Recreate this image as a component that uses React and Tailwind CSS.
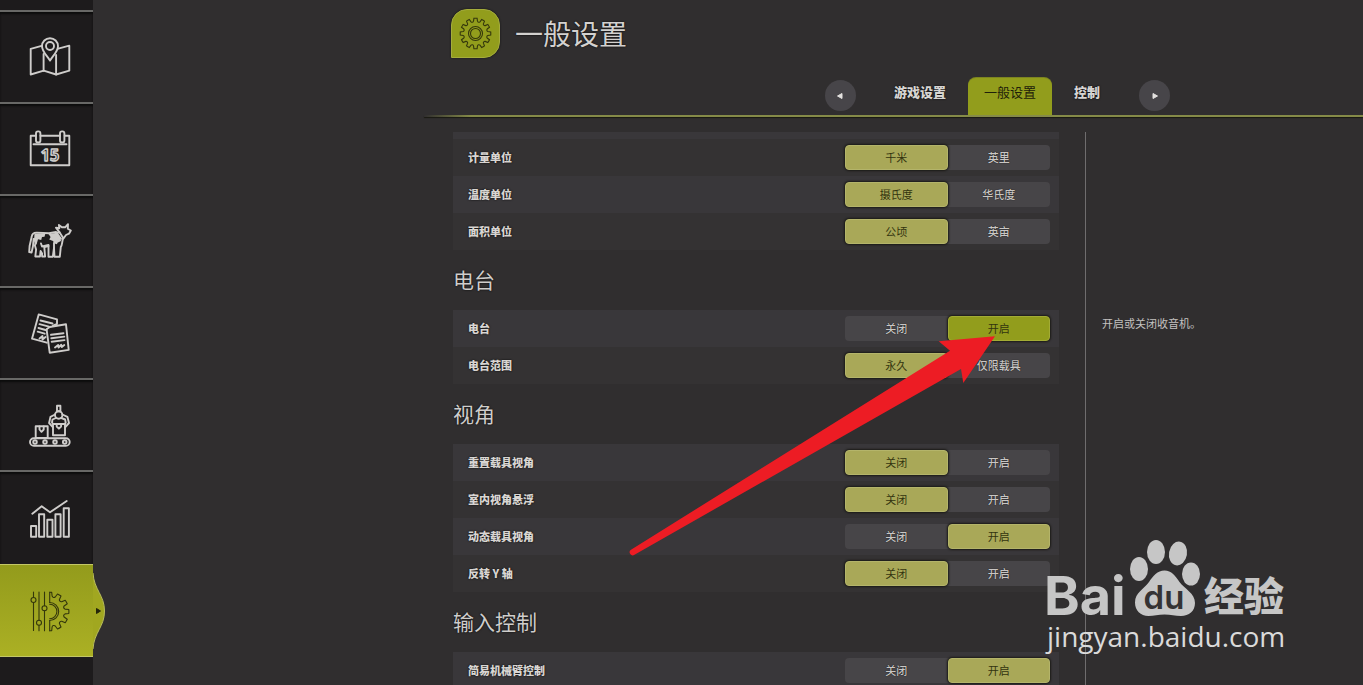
import { useState } from "react"

function gearPath(cx, cy, outer, inner, teeth)
{
    const step = (Math.PI * 2) / teeth
    const at = (r, a) => `${(cx + r * Math.cos(a)).toFixed(2)} ${(cy + r * Math.sin(a)).toFixed(2)}`
    const dip = step * inner * 0.24
    let d = ""
    for (let i = 0; i < teeth; i++) {
        const a = i * step
        d += `${i === 0 ? "M" : "L"}${at(inner, a - step * 0.3)} `
        d += `L${at(outer, a - step * 0.2)} A${outer} ${outer} 0 0 1 ${at(outer, a + step * 0.2)} `
        d += `L${at(inner, a + step * 0.3)} A${dip} ${dip} 0 0 0 ${at(inner, a + step * 0.7)} `
    }
    return d + "Z"
}

function Icon({ children, className = "text-[#cfcdcb]", strokeWidth = 1.9 })
{
    return (
        <svg
            className={`size-11 ${className}`}
            viewBox="0 0 44 44"
            fill="none"
            stroke="currentColor"
            strokeWidth={strokeWidth}
            strokeLinejoin="round"
            strokeLinecap="round"
            aria-hidden="true"
        >
            {children}
        </svg>
    )
}

const MapIcon = () => (
    <Icon>
        <path d="M13.6 10.8L2.7 13.8v25.7l13-3.8 12.4 3.8 13.2-3.8v-25l-11 3" />
        <path d="M15.6 19v16.7M28.1 20v19.5" />
        <path d="M22 25.6c-2.6-4.6-8-9-8-14.4a8 8 0 0 1 16 0c0 5.4-5.4 9.8-8 14.4z" />
        <circle cx="22" cy="11" r="4" />
    </Icon>
)

const CalendarIcon = () => (
    <Icon>
        <path d="M7.5 8.7H2.7v29.6h38.6V8.7h-4.6M12.5 8.7H32M5.5 17.3h33" />
        <rect x="8" y="4.4" width="4.4" height="11" rx="2" />
        <rect x="32" y="4.4" width="4.4" height="11" rx="2" />
        <text x="22" y="33.5" textAnchor="middle" fontSize="16" fontWeight="700" strokeWidth="1.5" className="font-['Noto_Sans',sans-serif]">15</text>
    </Icon>
)

const CowIcon = () => (
    <Icon>
        <path d="M28 13l-7 1.2-12-.6c-3-.2-4.800 1-5.200 3.700L1.600 27l-.4 6 2.400.5 1.400-6.500.6-7" />
        <path d="M6.500 20c1 2.500 1.300 4.500.4 6.500l1.200 4-.8 7h4.700l.6-5.500 1.500 2.500v3h3l-.8-9.300" />
        <path d="M13 24.500l1 3 6.500-1.500v11.700h4.300l1.200-8.700.5 8.700h5.300l1-9.700c1.500-1.500 1-4 2.200-8.500" />
        <path d="M16.500 28l4-1M26 24v5" />
        <path d="M31.500 13.300L28 8.700l3.300.6-.4-3.300 3 2.300h3.200L40 5.200l-.2 4.500 3 1.800-1.800 3.200-3 1.300-2.500 3.500z" />
        <path d="M31.500 13.300l-3 .5 4.500 6" />
        <path d="M6.500 14.500l11-.3-1 3.500-2.500.4-.8 3-3.200-.8-1.500 5.500-2.500-4z" fill="currentColor" stroke="none" />
        <path d="M20.500 15l8.500-1.300 3.500 4.700.5 3.600-3.500 1.700-.5 1.500-2.600-.8-1.400-2.400-3.800-1.500 1.400-2.500z" fill="currentColor" stroke="none" />
    </Icon>
)

const DocsIcon = () => (
    <Icon>
        <path d="M29 13V8.400L10.700 3.400 4 27.700l14.800 4M25 14.500l3.500-1.500" />
        <path d="M18.800 20v-2l3-2 16.200-2.700 2.700 25.600-19 2.800z" />
        <path d="M12.500 9.500l12 3M11.500 13.200l9.500 2.500M10.500 17l7 2M9.700 20.700l7 2M11.500 27.500l3-2.500v3.500l3-2.500" />
        <path d="M23 23.800l12.500-1.600M23.300 27.200l13-1.600M23.700 30.700l12.800-1.600M27 36.500l3.200-2.500.3 2.500 2.800-2.700.5 2.300 2.500-2" />
    </Icon>
)

const FactoryIcon = () => (
    <Icon>
        <rect x="2" y="35.2" width="39.7" height="7.6" rx="3.8" />
        <circle cx="7" cy="39" r="1.8" />
        <circle cx="17" cy="39" r="1.8" />
        <circle cx="27" cy="39" r="1.8" />
        <circle cx="36.7" cy="39" r="1.8" />
        <rect x="7.7" y="23.3" width="12" height="11.7" />
        <path d="M11.500 23.500v3l2 2.300 2.200-2.300v-3" />
        <path d="M25 21v11.300h12V21z" />
        <path d="M28.700 21v2.500l2.200 2.200 2.200-2.200V21" />
        <rect x="29" y="2.7" width="3.4" height="5.5" />
        <circle cx="30.7" cy="12" r="3.7" />
        <path d="M27 11.500l-4.500 2.300-1.400 6.200 3.700 4.200M28 15l-3.500 1.500-.5 3 1 1.500M34.400 11.500l5 2.300 1.600 6.200-3.700 4.200M33.400 15l3.700 1.500.6 3-.7 1.500" />
    </Icon>
)

const ChartIcon = () => (
    <Icon>
        <rect x="3" y="30" width="5.2" height="10.7" />
        <rect x="11" y="18.3" width="5.2" height="22.4" />
        <rect x="19.3" y="23.7" width="5.2" height="17" />
        <rect x="27.4" y="18.3" width="5.2" height="22.4" />
        <rect x="35.7" y="12.3" width="5.2" height="28.4" />
        <path d="M4.300 17.700l9.400-7.400 8.300 6L38.700 5" />
    </Icon>
)

const SettingsIcon = () => (
    <Icon className="text-[#34370c]" strokeWidth={1.1}>
        <clipPath id="half-gear">
            <rect x="21.3" y="0" width="23" height="44" />
        </clipPath>
        <path d="M5.500 3v5.500M5.500 13.500v28M11 3v28.200M11 36.200v5.500M16.500 3v13.800M16.500 21.800v20" />
        <circle cx="5.5" cy="11" r="2.5" />
        <circle cx="11" cy="33.7" r="2.5" />
        <circle cx="16.5" cy="19.3" r="2.5" />
        <g clipPath="url(#half-gear)">
            <path d={gearPath(21.7, 22.5, 19.2, 15.5, 12)} />
            <circle cx="21.7" cy="22.5" r="9" />
            <circle cx="21.7" cy="22.5" r="7.2" />
        </g>
        <path d="M21.700 3.300v10.200M21.700 31.500v10.200" />
    </Icon>
)

const menu = [
    { name: "地图", icon: MapIcon },
    { name: "日历", icon: CalendarIcon },
    { name: "动物", icon: CowIcon },
    { name: "合同", icon: DocsIcon },
    { name: "生产", icon: FactoryIcon },
    { name: "统计", icon: ChartIcon },
]

const groups = [
    {
        rows: [
            { name: "计量单位", options: ["千米", "英里"], value: 0 },
            { name: "温度单位", options: ["摄氏度", "华氏度"], value: 0 },
            { name: "面积单位", options: ["公顷", "英亩"], value: 0 },
        ],
    },
    {
        title: "电台",
        rows: [
            { name: "电台", options: ["关闭", "开启"], value: 1, focused: true },
            { name: "电台范围", options: ["永久", "仅限载具"], value: 0 },
        ],
    },
    {
        title: "视角",
        rows: [
            { name: "重置载具视角", options: ["关闭", "开启"], value: 0 },
            { name: "室内视角悬浮", options: ["关闭", "开启"], value: 0 },
            { name: "动态载具视角", options: ["关闭", "开启"], value: 1 },
            { name: "反转 Y 轴", options: ["关闭", "开启"], value: 0 },
        ],
    },
    {
        title: "输入控制",
        rows: [
            { name: "简易机械臂控制", options: ["关闭", "开启"], value: 1 },
        ],
    },
]

function Sidebar()
{
    return (
        <nav className="w-[93px] shrink-0 bg-[#1d1b1c]">
            <div className="h-3 border-b-2 border-[#686866]"></div>
            {menu.map(({ name, icon: MenuIcon }, i) => (
                <button
                    key={name}
                    aria-label={name}
                    className={`flex h-[92px] w-full items-center pl-7 shadow-[inset_0_2px_2px_#0c0c0c] ${i < menu.length - 1 ? "border-b-2 border-[#686866]" : ""}`}
                >
                    <MenuIcon />
                </button>
            ))}
            <button
                aria-label="设置"
                aria-current="page"
                className="relative flex h-[93px] w-full items-center border-y border-[#c3c766] bg-linear-to-b from-[#939b1c] to-[#abb024] pl-7"
            >
                <SettingsIcon />
                <svg className="absolute top-0 left-full h-[92px] w-[13px]" viewBox="0 0 13 92" aria-hidden="true">
                    <path d="M0 8C1 25 11.500 30 11.500 46S1 67 0 84z" fill="#a1a720" />
                    <path d="M0 8C1 25 11.500 30 11.500 46S1 67 0 84" fill="none" stroke="#b9bd5c" />
                    <path d="M3.500 43.500v5l4-2.500z" fill="#23250a" stroke="#23250a" strokeLinejoin="round" />
                </svg>
            </button>
        </nav>
    )
}

function RoundButton({ label, children })
{
    return (
        <button aria-label={label} className="flex size-[31px] items-center justify-center rounded-full bg-[#474549] text-[#e4e2e0]">
            <svg className="size-2" viewBox="0 0 8 8" fill="currentColor" stroke="currentColor" strokeLinejoin="round" aria-hidden="true">
                {children}
            </svg>
        </button>
    )
}

function Tabs()
{
    const [tab, setTab] = useState("一般设置")
    return (
        <div className="-ml-[29px] mt-5">
            <div className="flex h-[37px] justify-end pr-[193px]">
                <div className="mr-4 pt-0.5">
                    <RoundButton label="上一页"><path d="M6 1.500v5L1.500 4z" /></RoundButton>
                </div>
                {["游戏设置", "一般设置", "控制"].map((name) => (
                    <button
                        key={name}
                        onClick={() => setTab(name)}
                        className={`pb-2.5 text-[13px] leading-5 ${tab === name ? "rounded-t-lg bg-[#929d1c] px-4 text-[#1e200a] shadow-[0_-1px_0_#7c8420]" : "px-[22px] font-black text-[#d6d4d2] [text-shadow:0_0_2px_#000]"}`}
                    >
                        {name}
                    </button>
                ))}
                <div className="ml-[17px] pt-0.5">
                    <RoundButton label="下一页"><path d="M2 1.500v5L6.500 4z" /></RoundButton>
                </div>
            </div>
            <div className="h-0.5 bg-linear-to-r from-transparent via-[#858b48] via-5% to-[#858b48] shadow-[0_1px_1px_#1a1a12]"></div>
        </div>
    )
}

function SettingRow({ row, striped })
{
    const [value, setValue] = useState(row.value)
    return (
        <div className={`flex h-[37px] items-center justify-between pl-[15px] pr-[9px] ${striped ? "bg-[#39373a]" : "bg-[#343233]"}`}>
            <span className="text-[11px] font-black text-[#d8d5d2] [text-shadow:0_0_2px_#000]">{row.name}</span>
            <div role="group" aria-label={row.name} className="flex w-[205px] rounded-sm bg-[#474548]">
                {row.options.map((option, i) => (
                    <button
                        key={option}
                        aria-pressed={value === i}
                        onClick={() => setValue(i)}
                        className={`h-[25px] flex-1 rounded-sm border pb-0.5 text-[11px] leading-4 ${
                            value === i
                                ? `text-[#33340f] shadow-[0_0_2px_1px_#1b1a16] ${row.focused ? "border-[#a3ac35] bg-[#929d1c]" : "border-[#b4b46a] bg-[#a9a858]"}`
                                : "border-transparent font-medium text-[#c9c6c4] [text-shadow:0_0_1px_#000]"
                        }`}
                    >
                        {option}
                    </button>
                ))}
            </div>
        </div>
    )
}

function Arrow()
{
    return (
        <svg className="pointer-events-none absolute top-[330px] left-[620px] h-[230px] w-[385px]" viewBox="0 0 385 230" aria-hidden="true">
            <path d="M375 6.300L318.700 11.300 330 20.700 11 219.700A3 3 0 0 0 14.500 224.700L341 39 343.300 53z" fill="#ed1c24" />
        </svg>
    )
}

function Watermark()
{
    return (
        <svg className="pointer-events-none absolute right-[53px] bottom-[15px] h-[140px] w-[280px]" viewBox="0 0 280 140" fill="#c6c6c6" role="img" aria-label="Baidu 经验">
            <text x="14" y="85" fontSize="54" fontWeight="700" className="font-[Inter,sans-serif]">Bai</text>
            <ellipse cx="109" cy="39" rx="9" ry="12" />
            <ellipse cx="126" cy="22" rx="9" ry="12" />
            <ellipse cx="148" cy="23.5" rx="9" ry="12" transform="rotate(10 148 23.5)" />
            <ellipse cx="161" cy="44" rx="9" ry="11.5" />
            <path d="M134.500 40.500c7 0 11 5.500 15 11.500 5 7 15.500 11 15.500 21 0 8-6 13-14 13-6 0-10-1.500-16.500-1.500S124 86 118.500 86c-8 0-13.500-5.500-13.500-13.500 0-10 9-13.500 14-20.500 4-6 8.500-11.500 15.500-11.500z" />
            <text x="134" y="79" textAnchor="middle" fontSize="33" fontWeight="600" fill="#353334" className="font-[Inter,sans-serif]">du</text>
            <text x="174" y="81" fontSize="40" fontWeight="900">经验</text>
            <text x="17" y="117" fontSize="28" fontWeight="500" fill="#dadada" className="font-['Open_Sans',sans-serif]">jingyan.baidu.com</text>
        </svg>
    )
}

export default function App()
{
    return (
        <div className="relative flex h-screen overflow-hidden bg-[#302e2f] font-['Noto_Sans_CJK_SC',sans-serif] text-[#cfcdcb]">
            <Sidebar />
            <main className="flex min-w-0 flex-1 flex-col pl-[360px]">
                <header className="mt-[9px] flex items-center gap-[15px]">
                    <div className="-ml-0.5 size-[49px] rounded-2xl rounded-bl-none border border-[#a5ad3c] bg-[#929d1c] shadow-[0_0_2px_#111]">
                        <svg viewBox="0 0 47 47" fill="none" stroke="#34370c" strokeWidth="1.1" aria-hidden="true">
                            <path d={gearPath(23.5, 23.5, 15.3, 12.5, 12)} />
                            <circle cx="23.5" cy="23.5" r="7" />
                            <circle cx="23.5" cy="23.5" r="5" />
                        </svg>
                    </div>
                    <h1 className="text-[28px] leading-[49px] text-[#d3d1cf] [text-shadow:0_0_2px_#000]">一般设置</h1>
                </header>
                <Tabs />
                <div className="mt-[15px] flex min-h-0 flex-1">
                    <div className="min-w-0 flex-1 overflow-hidden">
                        <div className="h-[7px] bg-[#39373a]"></div>
                        {groups.map((group, g) => (
                            <section key={g}>
                                {group.title && (
                                    <h2 className="flex h-[60px] items-center pb-[3px] text-[21px] leading-8 [text-shadow:0_0_2px_#000]">{group.title}</h2>
                                )}
                                {group.rows.map((row, i) => (
                                    <SettingRow key={row.name} row={row} striped={group.title ? i % 2 === 0 : i % 2 === 1} />
                                ))}
                            </section>
                        ))}
                    </div>
                    <aside className="ml-[26px] w-[278px] shrink-0 border-l border-[#6f6d6e] pt-[183px] pl-4">
                        <p className="text-[11px] leading-4 text-[#c4c2c0]">开启或关闭收音机。</p>
                    </aside>
                </div>
            </main>
            <Arrow />
            <Watermark />
        </div>
    )
}
